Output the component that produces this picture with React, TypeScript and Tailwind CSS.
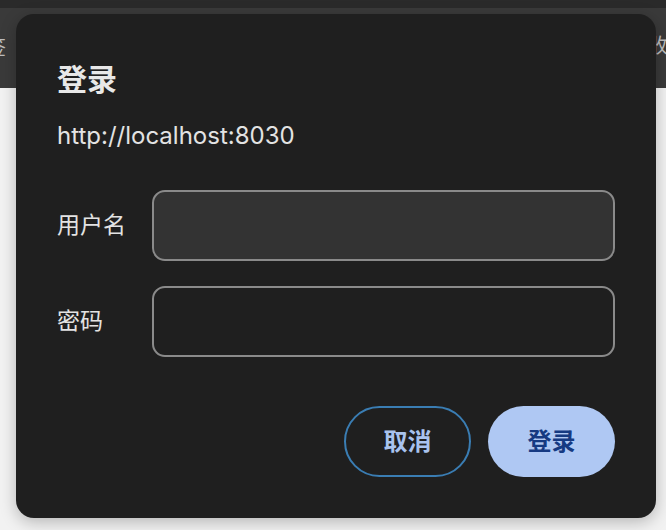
import React from 'react'

const font = { fontFamily: '"Inter", "Noto Sans CJK SC", sans-serif' }

export default function App() {
  return (
    <div className="relative w-[666px] h-[530px] overflow-hidden bg-[#f2f2f2]" style={font}>
      {/* browser chrome behind the dialog */}
      <div className="h-[8px] bg-[#2a2a2a]" />
      <div className="h-[80px] bg-[#3a3a3a] flex items-center justify-between text-[20px] text-[#bdbdbd]">
        <span className="-ml-[14px]">签</span>
        <span className="-mr-[22px] mb-[4px]">收藏</span>
      </div>

      {/* login dialog */}
      <div className="absolute left-[16px] top-[14px] w-[640px] h-[504px] rounded-[18px] bg-[#1f1f1f] shadow-[0_4px_16px_rgba(0,0,0,0.25)] pl-[41px] pr-[41px] pt-[47px] flex flex-col">
        <h1 className="text-[30px] leading-[36px] font-bold text-[#e8e8e8]">登录</h1>
        <p className="mt-[24px] text-[24px] leading-[30px] text-[#e3e3e3]">http://localhost:8030</p>

        <div className="mt-[39px] flex flex-col gap-[25px]">
          <div className="flex items-center">
            <label className="w-[95px] text-[23px] text-[#e3e3e3]">用户名</label>
            <div className="flex-1 h-[71px] rounded-[13px] border-2 border-[#8a8a8a] bg-[#333333]" />
          </div>
          <div className="flex items-center">
            <label className="w-[95px] text-[23px] text-[#e3e3e3]">密码</label>
            <div className="flex-1 h-[71px] rounded-[13px] border-2 border-[#8a8a8a] bg-[#1f1f1f]" />
          </div>
        </div>

        <div className="mt-[49px] flex justify-end gap-[17px]">
          <button className="w-[127px] h-[71px] rounded-full border-2 border-[#3a7db3] text-[24px] font-bold text-[#a9c3ee]">
            取消
          </button>
          <button className="w-[127px] h-[71px] rounded-full bg-[#afc8f3] text-[24px] font-bold text-[#163a82]">
            登录
          </button>
        </div>
      </div>
    </div>
  )
}
